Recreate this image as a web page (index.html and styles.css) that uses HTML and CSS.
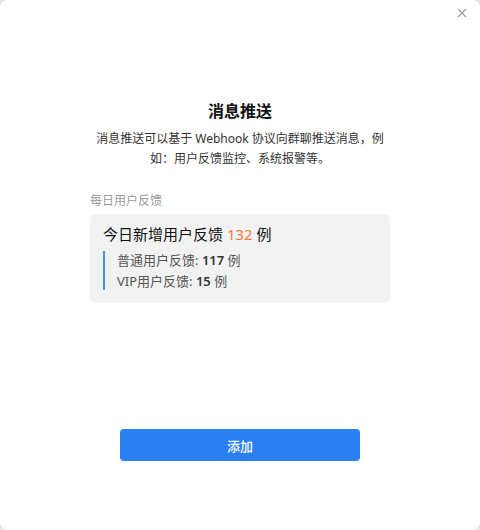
FILE: index.html
```html
<!DOCTYPE html>
<html lang="zh-CN">
<head>
<meta charset="utf-8">
<title>消息推送</title>
<link rel="stylesheet" href="styles.css">
</head>
<body>
<div class="window">
  <button class="close" aria-label="关闭">
    <svg width="10" height="10" viewBox="0 0 10 10"><path d="M1 1L9 9M9 1L1 9" stroke="#9a9a9a" stroke-width="1.1" fill="none"/></svg>
  </button>
  <div class="content">
    <h1 class="title">消息推送</h1>
    <p class="desc">消息推送可以基于 Webhook 协议向群聊推送消息，例如：用户反馈监控、系统报警等。</p>
    <div class="label">每日用户反馈</div>
    <div class="card">
      <div class="card-head">今日新增用户反馈 <span class="num">132</span> 例</div>
      <div class="card-list">
        <div class="item">普通用户反馈: <b>117</b> 例</div>
        <div class="item">VIP用户反馈: <b>15</b> 例</div>
      </div>
    </div>
    <button class="add">添加</button>
  </div>
</div>
</body>
</html>
```
FILE: styles.css
```css
html, body {
  margin: 0;
  padding: 0;
  background: #e6e6e6;
}
body {
  font-family: "Noto Sans", "Noto Sans CJK SC", sans-serif;
  color: #333;
}
.window {
  position: relative;
  width: 480px;
  height: 530px;
  background: #fff;
  border-radius: 8px;
  overflow: hidden;
}
.close {
  position: absolute;
  top: 7px;
  right: 12px;
  width: 12px;
  height: 12px;
  padding: 0;
  border: 0;
  background: none;
  display: flex;
  align-items: center;
  justify-content: center;
}
.content {
  width: 300px;
  margin: 0 auto;
  padding-top: 99px;
  display: flex;
  flex-direction: column;
}
.title {
  margin: 0;
  font-size: 16px;
  line-height: 24px;
  font-weight: 700;
  color: #111;
  text-align: center;
}
.desc {
  margin: 6px 0 0;
  font-size: 12px;
  line-height: 20px;
  color: #333;
  text-align: center;
}
.label {
  margin-top: 23px;
  font-size: 12px;
  line-height: 18px;
  color: #999;
}
.card {
  margin-top: 4px;
  background: #f2f2f2;
  border-radius: 6px;
  padding: 9px 13px 13px;
}
.card-head {
  font-size: 15px;
  line-height: 22px;
  color: #111;
}
.num {
  color: #f47b3a;
}
.card-list {
  margin-top: 6px;
  border-left: 2px solid #4a8fe2;
  padding-left: 12px;
  display: flex;
  flex-direction: column;
  gap: 3px;
}
.item {
  font-size: 13px;
  line-height: 18px;
  color: #555;
}
.item b {
  color: #333;
  font-weight: 600;
}
.add {
  margin: 126px auto 0;
  width: 240px;
  height: 32px;
  border: 0;
  border-radius: 4px;
  background: #2a80f0;
  color: #fff;
  font-family: "Noto Sans", "Noto Sans CJK SC", sans-serif;
  font-size: 13px;
  font-weight: 500;
}
```
